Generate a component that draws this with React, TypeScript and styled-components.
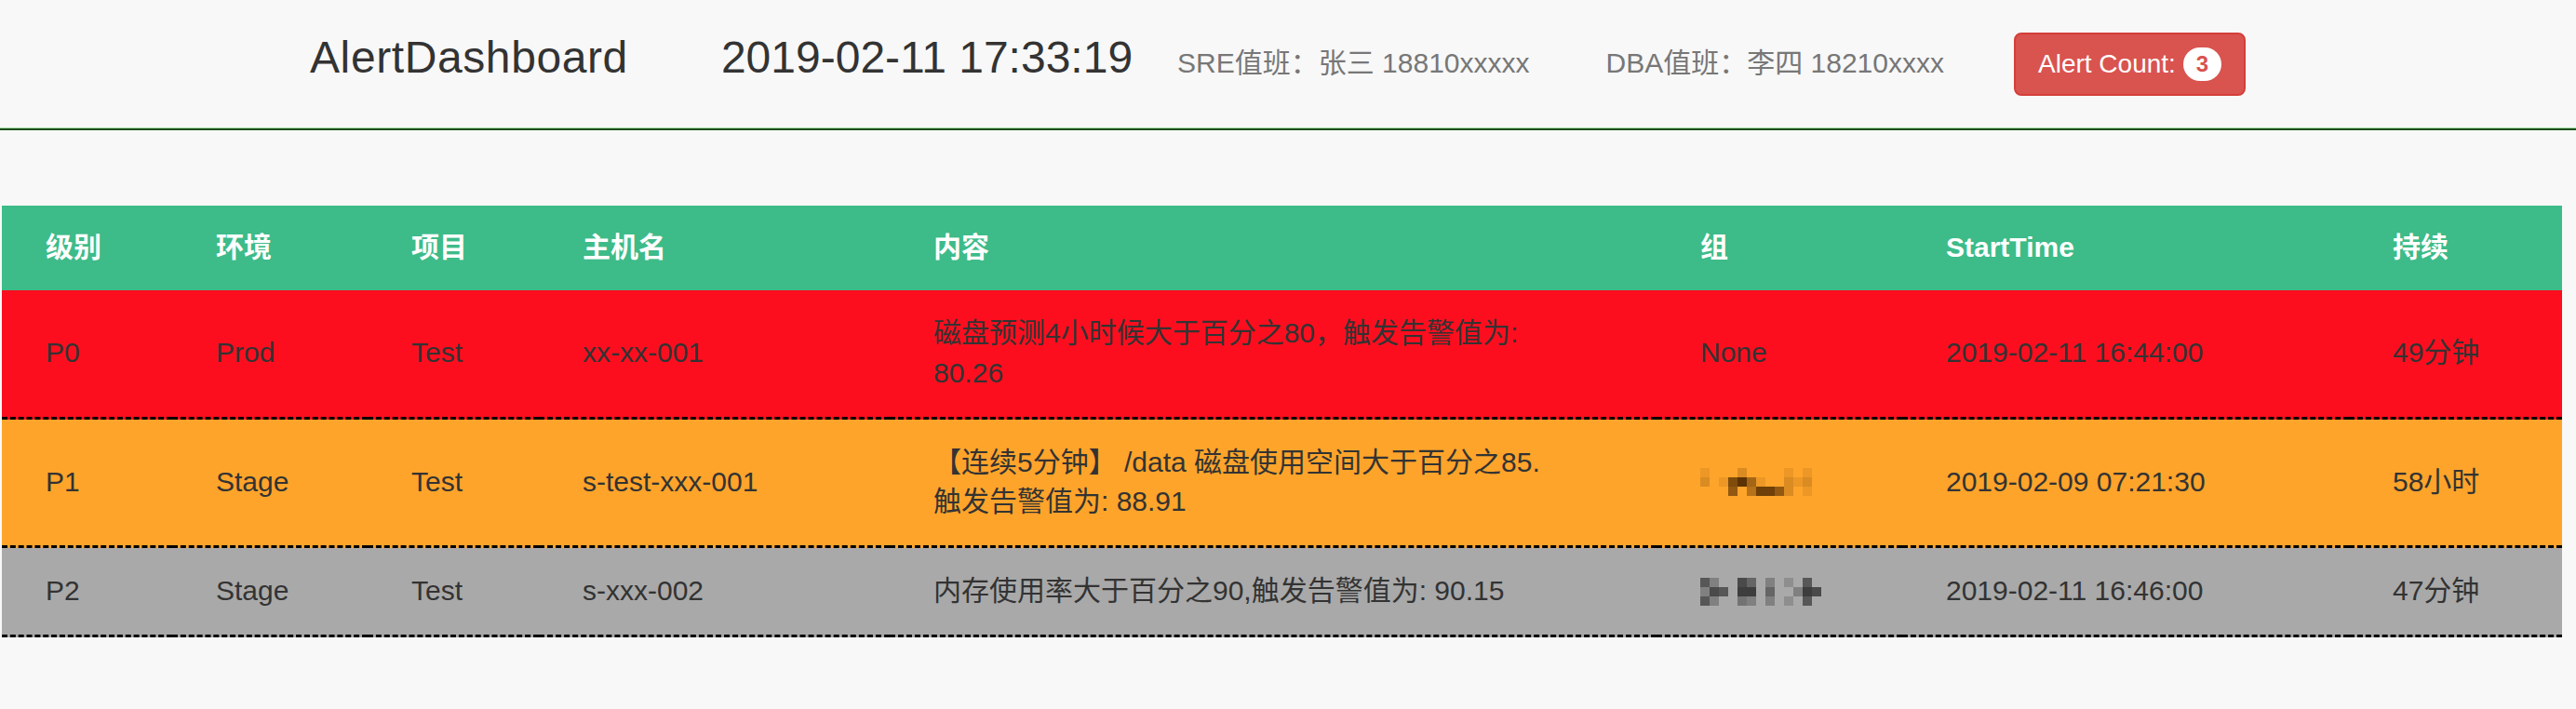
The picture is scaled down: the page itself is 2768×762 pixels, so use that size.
import React from "react"
import styled, { createGlobalStyle } from "styled-components"

// Styles
const GlobalStyle = createGlobalStyle`
  html, body {
    margin: 0;
    background: #f8f8f8;
  }
  body {
    font-family: "Liberation Sans", "Noto Sans CJK SC", sans-serif;
    color: #333;
  }
`

const Navbar = styled.nav`
  box-sizing: border-box;
  display: flex;
  align-items: baseline;
  height: 140px;
  padding: 35px 0 0 333px;
  border-bottom: 2px solid #1d4f1d;
  box-shadow: inset 0 -1px 0 #a6dba6;
`

const Brand = styled.span`
  font-size: 48px;
  line-height: 1;
  letter-spacing: 0.6px;
  color: #333;
`

const Clock = styled.span<{ $gap: number }>`
  margin-left: ${(props) => props.$gap}px;
  font-size: 48px;
  line-height: 1;
  color: #333;
`

const Duty = styled.span<{ $gap: number }>`
  margin-left: ${(props) => props.$gap}px;
  font-size: 30px;
  line-height: 1;
  color: #777;
`

const AlertButton = styled.button<{ $gap: number }>`
  display: inline-flex;
  align-items: center;
  gap: 8px;
  margin-left: ${(props) => props.$gap}px;
  padding: 12px 24px;
  border: 2px solid #d43f3a;
  border-radius: 8px;
  background: #d9534f;
  color: #fff;
  font-family: inherit;
  font-size: 28px;
  line-height: 40px;
  cursor: pointer;
`

const Badge = styled.span`
  display: inline-block;
  padding: 6px 14px;
  border-radius: 20px;
  background: #fff;
  color: #d9534f;
  font-size: 24px;
  font-weight: bold;
  line-height: 1;
`

const Table = styled.table`
  margin: 81px 0 0 2px;
  width: 2751px;
  table-layout: fixed;
  border-collapse: separate;
  border-spacing: 0;
  font-size: 30px;
  line-height: 42.86px;
`

const HeadCell = styled.th<{ $w: number }>`
  box-sizing: border-box;
  width: ${(props) => props.$w}px;
  padding: 24px 0 24px 47px;
  background: #3dbb89;
  color: #fff;
  font-weight: bold;
  text-align: left;
`

const rowColors = {
  P0: "#fc0e1e",
  P1: "#fea42b",
  P2: "#a9a9a9",
}

const Row = styled.tr<{ $level: keyof typeof rowColors }>`
  background: ${(props) => rowColors[props.$level]};
`

const Cell = styled.td`
  box-sizing: border-box;
  padding: 25px 0 25px 47px;
  border-bottom: 3px dashed #000;
  vertical-align: middle;
  color: #333;
`

const Content = styled.div`
  max-width: 666px;
`

// Pixelated (redacted) group names
const Mosaic = ({ cells, tint }: { cells: string[]; tint: string }) => (
  <svg width="130" height="30" viewBox="0 0 130 30" style={{ display: "block" }}>
    {cells.map((line, y) =>
      line.split("").map((v, x) =>
        v === "0" ? null : (
          <rect
            key={`${x}-${y}`}
            x={x * 10}
            y={y * 10}
            width="10"
            height="10"
            fill={tint}
            opacity={Number(v) / 10}
          />
        )
      )
    )}
  </svg>
)

// Constants
const columns = [
  { label: "级别", width: 183 },
  { label: "环境", width: 210 },
  { label: "项目", width: 184 },
  { label: "主机名", width: 377 },
  { label: "内容", width: 824 },
  { label: "组", width: 264 },
  { label: "StartTime", width: 480 },
  { label: "持续", width: 229 },
]

const alerts: Array<{
  level: keyof typeof rowColors
  env: string
  project: string
  host: string
  content: string
  group: React.ReactNode
  start: string
  duration: string
}> = [
  {
    level: "P0",
    env: "Prod",
    project: "Test",
    host: "xx-xx-001",
    content: "磁盘预测4小时候大于百分之80，触发告警值为: 80.26",
    group: "None",
    start: "2019-02-11 16:44:00",
    duration: "49分钟",
  },
  {
    level: "P1",
    env: "Stage",
    project: "Test",
    host: "s-test-xxx-001",
    content: "【连续5分钟】 /data 磁盘使用空间大于百分之85.触发告警值为: 88.91",
    group: (
      <Mosaic
        tint="#4a2600"
        cells={["1000200001010", "2017951002120", "0006048862010"]}
      />
    ),
    start: "2019-02-09 07:21:30",
    duration: "58小时",
  },
  {
    level: "P2",
    env: "Stage",
    project: "Test",
    host: "s-xxx-002",
    content: "内存使用率大于百分之90,触发告警值为: 90.15",
    group: (
      <Mosaic
        tint="#222"
        cells={["6300750302060", "3760880500387", "6300430302060"]}
      />
    ),
    start: "2019-02-11 16:46:00",
    duration: "47分钟",
  },
]

const App = () => {
  return (
    <>
      <GlobalStyle />
      <Navbar>
        <Brand>AlertDashboard</Brand>
        <Clock $gap={100}>2019-02-11 17:33:19</Clock>
        <Duty $gap={48}>SRE值班：张三 18810xxxxx</Duty>
        <Duty $gap={82}>DBA值班：李四 18210xxxx</Duty>
        <AlertButton $gap={75}>
          <span>Alert Count:</span>
          <Badge>3</Badge>
        </AlertButton>
      </Navbar>
      <Table>
        <thead>
          <tr>
            {columns.map((col) => (
              <HeadCell key={col.label} $w={col.width}>
                {col.label}
              </HeadCell>
            ))}
          </tr>
        </thead>
        <tbody>
          {alerts.map((alert) => (
            <Row key={alert.host} $level={alert.level}>
              <Cell>{alert.level}</Cell>
              <Cell>{alert.env}</Cell>
              <Cell>{alert.project}</Cell>
              <Cell>{alert.host}</Cell>
              <Cell>
                <Content>{alert.content}</Content>
              </Cell>
              <Cell>{alert.group}</Cell>
              <Cell>{alert.start}</Cell>
              <Cell>{alert.duration}</Cell>
            </Row>
          ))}
        </tbody>
      </Table>
    </>
  )
}

export default App
